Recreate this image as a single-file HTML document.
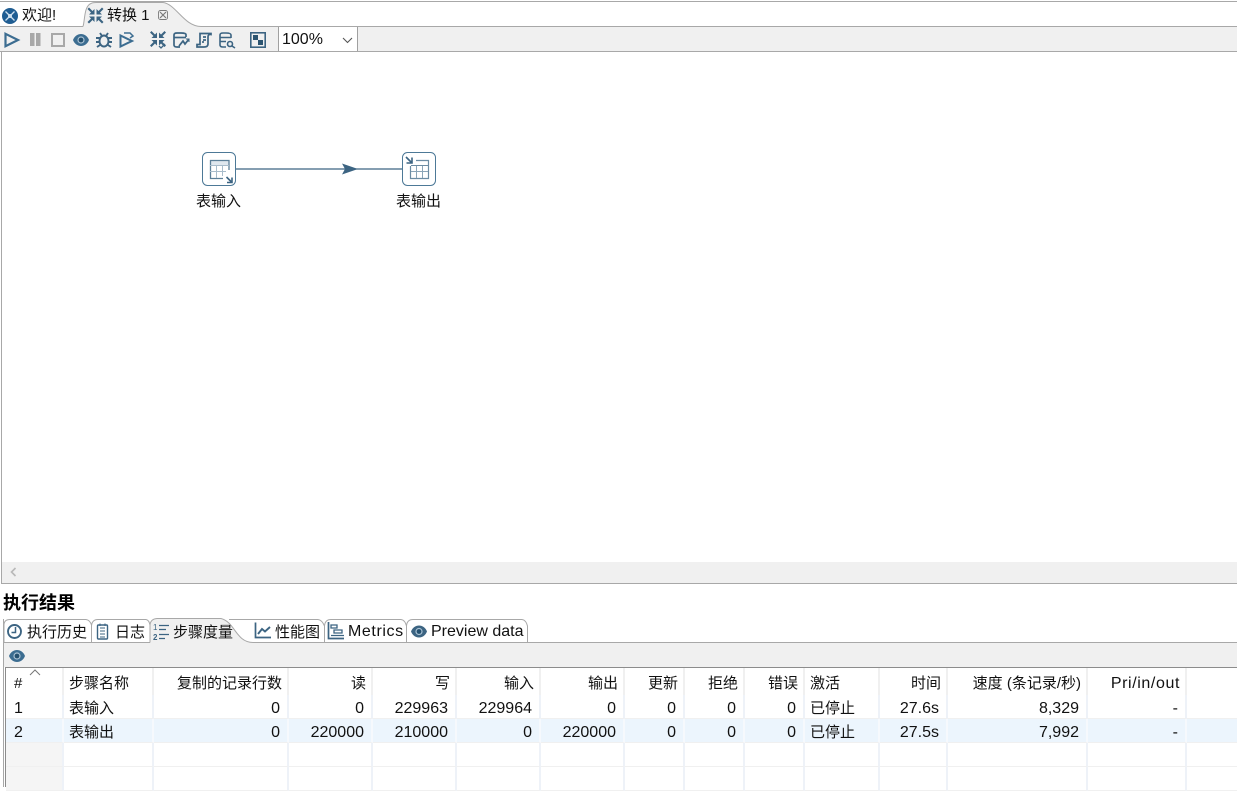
<!DOCTYPE html>
<html lang="zh"><head><meta charset="utf-8"><title>转换 1</title>
<style>
html,body{margin:0;padding:0;background:#fff}
body{width:1237px;height:787px;position:relative;overflow:hidden;font:15px/20px "Liberation Sans","Noto Sans CJK SC",sans-serif;color:#111}
.a{position:absolute;white-space:nowrap}
.bar{position:absolute}
svg.o{position:absolute;left:0;top:0}
table{position:absolute;left:6px;top:668px;width:1231px;table-layout:fixed;border-collapse:separate;border-spacing:0;background:#fff}
td,th{padding:5px 7px 0 5px;font-weight:400;height:18px;border-right:2px solid #eef2f8;border-bottom:1px solid #f0f0f0;text-align:right;overflow:hidden;white-space:nowrap;box-sizing:content-box;line-height:18px}
th{height:20px;padding-top:7px;border-bottom:0;padding-right:5px;border-right-color:#f0f0f0;vertical-align:top}
td{font-size:16px}
td.c{font-size:15px}
.l{text-align:left}
tr.s td{background:#ecf5fd;border-right-color:#f6f9fd}
td.g{background:#f5f5f5}
tr>*:last-child{border-right:0}
</style></head><body>

<div class="bar" style="left:0;top:1px;width:1237px;height:1px;background:#a8a8a8"></div>
<div class="bar" style="left:0;top:27px;width:1237px;height:24px;background:#f0f0f0"></div>
<div class="bar" style="left:278px;top:27px;width:80px;height:24px;background:#fff;border-left:1px solid #a0a0a0;border-right:1px solid #a0a0a0;box-sizing:border-box"></div>
<div class="bar" style="left:0;top:51px;width:1237px;height:1px;background:#a8a8a8"></div>
<div class="bar" style="left:1px;top:51px;width:1px;height:533px;background:#a8a8a8"></div>
<div class="bar" style="left:2px;top:562px;width:1235px;height:21px;background:#f0f0f0"></div>
<div class="bar" style="left:1px;top:583px;width:1236px;height:1px;background:#a8a8a8"></div>

<div class="bar" style="left:4px;top:643px;width:1233px;height:24px;background:#f0f0f0"></div>
<div class="bar" style="left:3px;top:619px;width:1px;height:168px;background:#a8a8a8"></div>
<div class="bar" style="left:6px;top:667px;width:1231px;height:1px;background:#8c8c8c"></div>
<div class="bar" style="left:5px;top:667px;width:1px;height:120px;background:#8c8c8c"></div>

<svg class="o" width="1237" height="787" viewBox="0 0 1237 787" fill="none">
  <defs>
    <g id="sp" fill="#3c6482">
      <path d="M-1 -1V-6.500L-3 -4.500L-6.500 -8L-8 -6.500L-4.500 -3L-6.500 -1Z"/>
      <path d="M1 -1V-6.500L3 -4.500L6.500 -8L8 -6.500L4.500 -3L6.500 -1Z"/>
      <path d="M-1 1V6.500L-3 4.500L-6.500 8L-8 6.500L-4.500 3L-6.500 1Z"/>
      <path d="M1 1V6.500L3 4.500L6.500 8L8 6.500L4.500 3L6.500 1Z"/>
    </g>
  </defs>
  <!-- editor tabs -->
  <path d="M83 27C85 20 84 6 91 3.500Q92.500 3 96 3H163C176 4 184 27 201 27Z" fill="#f0f0f0"/>
  <path d="M83 26.500C85 20 84 6 91 3.500Q92.500 2.500 96 2.500H163C176 4 184 26.500 201 26.500H1237" stroke="#a8a8a8"/>
  <path d="M0 26.500H83" stroke="#a8a8a8"/>
  <circle cx="10" cy="16" r="8" fill="#1f5d92"/>
  <path d="M5.500 11.500L14.500 20.500M14.500 11.500L5.500 20.500" stroke="#cfe0ee" stroke-width="1.300"/>
  <circle cx="10" cy="16" r="2" fill="#cfe0ee"/>
  <use href="#sp" x="95.500" y="15.500"/>
  <g stroke="#7a7a7a" fill="none"><rect x="158.500" y="10.500" width="9" height="9" rx="2" stroke-width=".9"/><path d="M160 12L166 18M166 12L160 18" stroke-width="1.200"/></g>

  <!-- toolbar -->
  <path d="M5.500 33.800L18 40L5.500 46.200Z" stroke="#3c6d91" stroke-width="2.200"/>
  <path d="M30 33H34.500V46H30ZM36 33H40.500V46H36Z" fill="#a8a8a8"/>
  <rect x="52" y="34" width="12" height="12" stroke="#a8a8a8" stroke-width="2"/>
  <path d="M73 40C76 32 86 32 89 40C86 48 76 48 73 40Z" fill="#3c6d91"/><circle cx="81" cy="40" r="3.600" fill="#a9c1d3"/><circle cx="81" cy="40" r="2.400" fill="#24506f"/>
  <g stroke="#3c6482" stroke-width="1.900">
    <ellipse cx="104" cy="41" rx="4.500" ry="5.500"/>
    <path d="M100 33L102 36M108 33L106 36M96 38H100M112 38H108M96 42H99.500M112 42H108.500M97 47L100 45M111 47L108 45"/>
  </g>
  <path d="M120.500 35.500V46.500L132 41L120.500 35.500Z" stroke="#3c6d91" stroke-width="2"/>
  <path d="M124 33H130L133 36L130 38" stroke="#3c6d91" stroke-width="1.500"/>
  <use href="#sp" x="158" y="39" />
  <path d="M159 46L161 48L165 44" stroke="#3c6482" stroke-width="1.300"/>
  <g stroke="#3c6482" stroke-width="1.700">
    <path d="M186 37V34.500Q186 33 181 33H177Q174 33 174 35V45Q174 47 177 47H180"/>
    <path d="M174 37.500H186"/>
    <path d="M179 46L183 41L185 44L189 39" stroke-width="1.800"/>
    <path d="M186 39H189V42" stroke-width="1"/>
  </g>
  <g stroke="#3c6482" stroke-width="1.700">
    <path d="M200 33.500H211V34.500Q208 34 208 37V44Q208 47 204 47H197V44.500H200ZM200 33.500V44.500"/>
    <path d="M203 37H206M203 40H206M203 43V41"/>
  </g>
  <g stroke="#3c6482" stroke-width="1.600">
    <path d="M231 38V35Q231 33 226 33H223Q220 33 220 35V45Q220 47 223 47H226"/>
    <path d="M220 37.500H231M220 41.500H226"/>
    <circle cx="230" cy="44" r="2.500"/><path d="M232 46L235 48"/>
  </g>
  <rect x="250.800" y="32.800" width="14.400" height="14.400" stroke="#3c6482" stroke-width="1.600"/>
  <rect x="253" y="35" width="5" height="5" fill="#2c5470"/><rect x="258" y="40" width="5" height="5" fill="#2c5470"/>
  <path d="M343 38L347.500 42.500L352 38" stroke="#555" stroke-width="1.100"/>

  <!-- canvas -->
  <path d="M236 169H402" stroke="#3c6482" stroke-width="1.200"/>
  <path d="M342 163.500L358 169L342 174.500L345 169Z" fill="#3c6482"/>

  <rect x="202.500" y="152.500" width="33" height="33" rx="5" fill="#fff" stroke="#4d7997"/>
  <rect x="210" y="160" width="19" height="5" fill="#dfe7ee"/>
  <path d="M210 160.500H229V170" stroke="#5c7f98" stroke-width="1.300"/>
  <path d="M210.500 160V178.500H223" stroke="#5c7f98" stroke-width="1.300"/>
  <path d="M210 165.500H229M210 171.500H226M216.500 165V178M222.500 165V176" stroke="#a8bccb"/>
  <path d="M226.500 177L231.500 182M232 177.500V182.500H227" stroke="#3c6482" stroke-width="1.600"/>

  <rect x="402.500" y="152.500" width="33" height="33" rx="5" fill="#fff" stroke="#4d7997"/>
  <path d="M406 157L411.500 162.500M412 157.500V163H406.500" stroke="#3c6482" stroke-width="1.600"/>
  <path d="M416 160.500H428.500V178.500H410.500V166" stroke="#6c8ca3" stroke-width="1.200"/>
  <rect x="411" y="165" width="17" height="1" fill="#6c8ca3"/>
  <path d="M411 171.500H428M416.500 166V178M422.500 166V178" stroke="#8ba5b8"/>

  <path d="M15.500 568L11.500 572L15.500 576" stroke="#b8b8b8" stroke-width="1.600"/>

  <!-- bottom tabs -->
  <path d="M4 642V625Q4 619.500 10 619.500H86Q90 620 91.500 625V642" stroke="#a8a8a8" fill="#fff"/>
  <path d="M91.500 642V626Q92 619.500 98 619.500H146Q149 620 150 625V642" stroke="#a8a8a8" fill="#fff"/>
  <path d="M229 619.500H318Q322 620 324.500 626V642" stroke="#a8a8a8"/>
  <path d="M324.500 626Q325 619.500 331 619.500H401Q405 620 406.500 626V642" stroke="#a8a8a8"/>
  <path d="M406.500 626Q407 619.500 413 619.500H522Q526 620 527.500 626V642" stroke="#a8a8a8"/>
  <path d="M3 642.500H150M252 642.500H1237" stroke="#a8a8a8"/>
  <path d="M150 643V625Q150.500 619 157 618.500H221C235 622 236 642.500 253 642.500V643Z" fill="#f0f0f0"/>
  <path d="M150 642.500V625Q150.500 619 157 618.500H221C235 622 236 642.500 253 642.500" stroke="#a8a8a8"/>

  <circle cx="14.500" cy="631.500" r="6.500" stroke="#3c6482" stroke-width="1.900"/>
  <path d="M15.500 627V632.500H11.500" stroke="#3c6482" stroke-width="1.500"/>
  <rect x="97.500" y="625" width="10" height="14" rx="1" stroke="#3c6482" stroke-width="1.400"/>
  <path d="M100 628H105M100 631H105M100 634H105M100 637H105M100 623.500V626M105 623.500V626" stroke="#3c6482"/>
  <text x="153" y="630" font-size="8" fill="#3c6482" font-family="Liberation Sans,sans-serif">1</text>
  <text x="153" y="640" font-size="8" fill="#3c6482" font-family="Liberation Sans,sans-serif" font-weight="700">2</text>
  <path d="M159 625.500H169M159 629.500H166M159 634.500H169M159 638.500H165" stroke="#3c6482" stroke-width="1.300"/>
  <path d="M255.500 622.500V637.500H271" stroke="#3c6482" stroke-width="1.700"/>
  <path d="M258 634L262 629L265 631.500L270 627" stroke="#3c6482" stroke-width="1.900"/>
  <path d="M328.500 622V638.500H344" stroke="#3c6482" stroke-width="1.700"/>
  <path d="M331 625H337V628H331ZM334 630H342V633H334ZM331 635.500H344" stroke="#3c6482" stroke-width="1.300"/>
  <path d="M411 631.500C414 623.500 424 623.500 427 631.500C424 639.500 414 639.500 411 631.500Z" fill="#3c6482"/><circle cx="419" cy="631.500" r="3.600" fill="#a9c1d3"/><circle cx="419" cy="631.500" r="2.400" fill="#24506f"/>
  <path d="M9 656C12 648 22 648 25 656C22 664 12 664 9 656Z" fill="#3c6d91"/><circle cx="17" cy="656" r="3.600" fill="#a9c1d3"/><circle cx="17" cy="656" r="2.400" fill="#24506f"/>
</svg>

<span class="a" style="left:22px;top:6px">欢迎!</span>
<span class="a" style="left:107px;top:6px">转换 1</span>
<span class="a" style="left:282px;top:30px;font-size:16px">100%</span>
<span class="a" style="left:196px;top:192px">表输入</span>
<span class="a" style="left:396px;top:192px">表输出</span>
<span class="a" style="left:3px;top:592px;font-size:18px;line-height:22px;font-weight:700;color:#000">执行结果</span>
<span class="a" style="left:27px;top:623px">执行历史</span>
<span class="a" style="left:115px;top:623px">日志</span>
<span class="a" style="left:173px;top:623px">步骤度量</span>
<span class="a" style="left:275px;top:623px">性能图</span>
<span class="a" style="left:348px;top:622px;font-size:16px;letter-spacing:.6px">Metrics</span>
<span class="a" style="left:431px;top:622px;font-size:16px">Preview data</span>

<table>
<colgroup><col style="width:58px"><col style="width:90px"><col style="width:135px"><col style="width:84px"><col style="width:84px"><col style="width:84px"><col style="width:84px"><col style="width:60px"><col style="width:60px"><col style="width:60px"><col style="width:75px"><col style="width:68px"><col style="width:140px"><col style="width:99px"><col></colgroup>
<tr><th class="l" style="padding-left:8px">#</th><th class="l">步骤名称</th><th>复制的记录行数</th><th>读</th><th>写</th><th>输入</th><th>输出</th><th>更新</th><th>拒绝</th><th>错误</th><th class="l">激活</th><th>时间</th><th>速度 (条记录/秒)</th><th style="font-size:16px;letter-spacing:.6px">Pri/in/out</th><th></th></tr>
<tr><td class="l" style="padding-left:8px">1</td><td class="l c">表输入</td><td>0</td><td>0</td><td>229963</td><td>229964</td><td>0</td><td>0</td><td>0</td><td>0</td><td class="l c">已停止</td><td>27.6s</td><td>8,329</td><td>-</td><td></td></tr>
<tr class="s"><td class="l" style="padding-left:8px">2</td><td class="l c">表输出</td><td>0</td><td>220000</td><td>210000</td><td>0</td><td>220000</td><td>0</td><td>0</td><td>0</td><td class="l c">已停止</td><td>27.5s</td><td>7,992</td><td>-</td><td></td></tr>
<tr><td class="g"></td><td></td><td></td><td></td><td></td><td></td><td></td><td></td><td></td><td></td><td></td><td></td><td></td><td></td><td></td></tr>
<tr><td class="g"></td><td></td><td></td><td></td><td></td><td></td><td></td><td></td><td></td><td></td><td></td><td></td><td></td><td></td><td></td></tr>
</table>
<svg class="o" width="60" height="680" fill="none"><path d="M30 675L35 670L40 675" stroke="#777"/></svg>
</body></html>
